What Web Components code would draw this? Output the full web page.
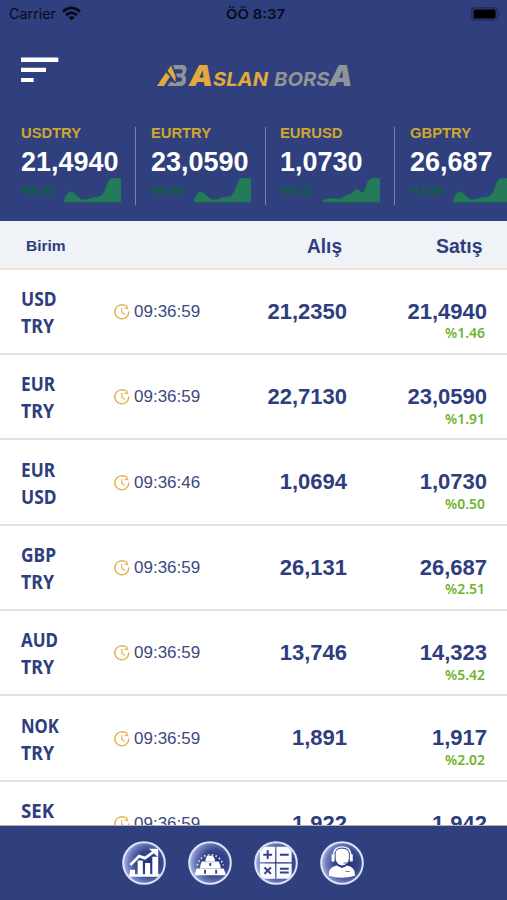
<!DOCTYPE html>
<html lang="tr">
<head>
<meta charset="utf-8">
<title>Aslan Borsa</title>
<style>
html,body{margin:0;height:100%;overflow:hidden;background:#fff}
body{font-family:"Liberation Sans",Arial,sans-serif;color:#2e3d7d}
</style>
</head>
<body>
<borsa-app></borsa-app>
<script>
const define = (name, render, after) => customElements.define(name, class extends HTMLElement {
  connectedCallback() {
    if (this.shadowRoot) return;
    this.attachShadow({mode: 'open'}).innerHTML = render(this);
    if (after) after(this);
  }
});
const a = (el, n) => el.getAttribute(n);

// Text squeezed or stretched horizontally to a given width.
define('fit-text', el => `<style>
:host{display:inline-block;white-space:nowrap;width:${a(el,'w')}px}
span{display:inline-block;transform-origin:0 50%}
</style><span><slot></slot></span>`, el => {
  const s = el.shadowRoot.querySelector('span');
  const w = s.offsetWidth ? s.getBoundingClientRect().width : 0;
  if (w) s.style.transform = `scaleX(${a(el,'w') / w})`;
});

define('status-bar', () => `<style>
:host{display:grid;grid-template-columns:1fr auto 1fr;align-items:center;height:28px;padding:0 6px 0 9px;color:#080b17;font:14px/28px Inter,sans-serif}
.l{display:flex;align-items:center;gap:6px}
.b{font-weight:600;font-size:13.5px}
.r{justify-self:end;display:flex;margin-top:-1px}
svg{display:block}
.l svg{margin-top:-2px}
</style>
<div class="l"><fit-text w="47">Carrier</fit-text>
<svg width="19" height="15" viewBox="0 0 19 15"><g fill="none" stroke="#080b17" stroke-width="2.8"><path d="M1 5.6Q9.5-1.8 18 5.6"/><path d="M4 9.2Q9.5 4.4 15 9.2"/></g><path d="M6.4 11.3Q9.5 9 12.6 11.3L9.5 14.4Z" fill="#080b17"/></svg></div>
<fit-text class="b" w="59">ÖÖ 8:37</fit-text>
<div class="r"><svg width="30" height="14" viewBox="0 0 30 14"><rect x=".8" y=".8" width="25.6" height="12.2" rx="3.4" fill="none" stroke="#20294f" stroke-width="1.2"/><rect x="2.6" y="2.4" width="22" height="9" rx="1.6" fill="#000"/><path d="M28 4.8q1.6 2 0 4.2z" fill="#20294f"/></svg></div>`);

define('brand-logo', () => `<style>
:host{display:flex;align-items:baseline;font:italic 700 20px/24px Inter,sans-serif;color:#e2aa3e;height:24px}
svg{display:block;align-self:flex-start;margin:1px 2px 0 0}
.big{font-size:28.5px;font-weight:900}
.g{color:#8f9496}
.n{font-weight:700;font-size:19px}
</style>
<svg width="30" height="22" viewBox="0 0 30 22">
<path d="M0 21 9 7.5 13 11.5 7 21ZM10.5 5.8 14 .5 18.5 11 18.5 17Z" fill="#e2aa3e"/>
<path d="M16 0H26Q30 .8 29.5 5 29.3 8.5 27 10 29.3 11.3 29 15.5 28.5 20.4 24 21H10.5L13.5 16.5 18.5 18.5 20 16.8H23.5Q25 16.5 25 14.5 25 12.3 23 12.3H20.5L18.8 8.6H24Q25.6 8.2 25.7 6.3 25.7 4.3 24 4.3H17.5Z" fill="#8f9496"/>
</svg>
<fit-text class="big" w="24">A</fit-text><fit-text class="n" w="55">SLAN</fit-text><fit-text class="n g" w="55.5" style="margin-left:5.5px">BORS</fit-text><fit-text class="big g" w="23.5">A</fit-text>`);

define('app-bar', () => `<style>
:host{display:flex;height:94px;padding:0 0 0 21px}
.menu{margin-top:29px;width:38px}
brand-logo{margin:36px 0 0 98px}
svg{display:block}
</style>
<svg class="menu" width="38" height="26" viewBox="0 0 38 26" fill="#fff"><path d="M0 .5H37.3V5H0zM0 10.7H25V15H0zM0 21H12.7V25H0z"/></svg>
<brand-logo></brand-logo>`);

const charts = [
 'M0 24V22C4 12 7 12 13 18 18 24 22 21 25 21 29 18 35 21 39 16 43 11 43 0 49 0H57V24Z',
 'M0 24V22.5C2 21 8 20.5 12 20.5 18 22.5 21 18 24 17 29 16.5 31 12.5 34 11 38 13 38 16 41 13.5 44 9 44 0 50 0H57V24Z'];
define('ticker-card', el => `<style>
:host{display:block;flex:none;box-sizing:border-box;width:115.2px;height:78px;border-right:1px solid #7c83a0;margin-right:14.4px;white-space:nowrap}
:host(:last-of-type){border-color:transparent}
.l{font:700 14.5px/22px "Liberation Sans",sans-serif;color:#cda72e;margin-top:-5px}
.v{font:700 27px/30px "Liberation Sans",sans-serif;color:#fff;margin-top:2.6px}
.c{display:flex;margin-top:1.4px}
.p{font:700 12px/26px "Liberation Sans",sans-serif;color:#0b6340;width:43px}
svg{display:block}
</style>
<div class="l"><fit-text w="${a(el,'lw')}">${a(el,'label')}</fit-text></div><div class="v"><fit-text w="${a(el,'vw')}">${a(el,'value')}</fit-text></div>
<div class="c"><div class="p">${a(el,'pct')}</div><svg width="57" height="25" viewBox="0 0 57 25"><path d="${charts[+a(el,'chart')]}" fill="#237b59" stroke="#1c7350" stroke-width=".8"/></svg></div>`);

define('ticker-strip', () => `<style>
:host{display:flex;padding:5px 0 0 21px;height:94px;overflow:hidden}
</style>
<ticker-card label="USDTRY" lw="60" value="21,4940" vw="97.5" pct="%0.65" chart="0"></ticker-card>
<ticker-card label="EURTRY" lw="60" value="23,0590" vw="97.5" pct="%0.96" chart="0"></ticker-card>
<ticker-card label="EURUSD" lw="62.5" value="1,0730" vw="82.5" pct="%0.12" chart="1"></ticker-card>
<ticker-card label="GBPTRY" lw="61" value="26,687" vw="82.5" pct="%1.08" chart="0"></ticker-card>`);

define('table-head', () => `<style>
:host{display:grid;grid-template-columns:1fr 140px 139px;height:48.5px;box-sizing:border-box;background:#eff2f6;border-bottom:2px solid #eee3d5;padding:2px 25px 0 26px;font-weight:700;align-items:center;line-height:46px}
.a{font-size:15.5px}.b{font-size:20px;text-align:right}
.s{padding-right:1.5px}
</style><div class="a">Birim</div><div class="b s"><fit-text w="35">Alış</fit-text></div><div class="b"><fit-text w="46.5">Satış</fit-text></div>`);

define('time-stamp', el => `<style>
:host{display:flex;align-items:center;gap:4px;font-size:17px;line-height:20px;color:#3c497f}
svg{display:block}
</style><svg width="16" height="16" viewBox="0 0 16 16" fill="none" stroke="#e3b556" stroke-width="1.5"><path d="M11.6 1.9A7 7 0 1 0 14.8 7.4"/><path d="M12.4.9 13.6 4.6 10.4 4.2M7.7 4V8.2L11 10.6" stroke-width="1.2"/></svg><span><slot></slot></span>`);

const widths = {USD:35.5, TRY:33, EUR:34, GBP:35, AUD:37, NOK:38, SEK:33};
define('rate-row', el => {
  const [x, y] = a(el, 'pair').split('/');
  return `<style>
:host{display:grid;grid-template-columns:93px 1fr 120px 140px;height:85.35px;box-sizing:border-box;border-bottom:2px solid #e3e3e5;padding:0 20px 0 21px;background:#fff}
.p{font:700 18.7px/27px "Noto Sans",sans-serif;padding-top:15.5px}
.p fit-text{display:block}
time-stamp{margin-top:32.5px;align-self:start}
.n{font-weight:700;font-size:22px;line-height:26px;text-align:right;padding-top:29.2px}
.c{font:600 14px/18px "Noto Sans",sans-serif;color:#6cb52d;padding-right:2.5px;margin-top:-.4px}
</style>
<div class="p"><fit-text w="${widths[x]}">${x}</fit-text><fit-text w="${widths[y]}">${y}</fit-text></div>
<time-stamp>${a(el,'time')}</time-stamp>
<div class="n">${a(el,'buy')}</div>
<div class="n">${a(el,'sell')}<div class="c"><fit-text w="40">${a(el,'change')}</fit-text></div></div>`;
});

const rates = [
 ['USD/TRY','09:36:59','21,2350','21,4940','%1.46'],
 ['EUR/TRY','09:36:59','22,7130','23,0590','%1.91'],
 ['EUR/USD','09:36:46','1,0694','1,0730','%0.50'],
 ['GBP/TRY','09:36:59','26,131','26,687','%2.51'],
 ['AUD/TRY','09:36:59','13,746','14,323','%5.42'],
 ['NOK/TRY','09:36:59','1,891','1,917','%2.02'],
 ['SEK/TRY','09:36:59','1,922','1,942','']];
define('rate-table', () => `<style>:host{display:block;flex:1;min-height:0;overflow:hidden}</style>` +
  rates.map(r => `<rate-row pair="${r[0]}" time="${r[1]}" buy="${r[2]}" sell="${r[3]}" change="${r[4]}"></rate-row>`).join(''));

const icons = {
 chart: `<path d="M7 34H39V36.5H7zM8 29.5H13.3V35H8zM16 20H21.3V35H16zM23.6 22.5H28.8V35H23.6zM31 16H37V35H31z" fill="#fff"/><path d="M8.5 24.5 17.5 15.5 23.5 17.5 32.5 11" fill="none" stroke="#fff" stroke-width="2.8"/><path d="M27.5 8H37V16.5Z" fill="#fff"/>`,
 gold: `<path d="M7 35V33.5L8.8 28H12.5V25.5L14 21H18V18.5L19.5 15H25.5L27.5 18.5V21H31.5L33.3 25.5V28H36.5L38.5 33.5V35Z" fill="#fff"/><path d="M17.4 29.5V33.5M28.8 29.5V33.5M22.8 22.5V25.5" stroke="#3f4b85" stroke-width="2"/><path d="M13 28.2H33.5M18 21.3H28" stroke="#b3bbdc" stroke-width=".8"/><path d="M9.5 25A13.5 13.5 0 0 1 36 25" fill="none" stroke="#dbe1f7" stroke-width="1.8" stroke-dasharray="1.6 2.4"/>`,
 calc: `<path d="M6 6H21.7V21.7H6zM22.9 6H38.5V21.7H22.9zM6 22.9H21.7V38.5H6zM22.9 22.9H38.5V38.5H22.9z" fill="#fafbff"/><path d="M9.5 14H18.5M14 9.5V18.5M26.5 14H35.5M10.7 27 17.3 33.6M17.3 27 10.7 33.6M26.5 28.4H35.5M26.5 32.3H35.5" stroke="#35427c" stroke-width="2.1"/>`,
 support: `<path d="M9 35.5Q8.500 26.500 17 25L22.500 27.500 28 25Q36 26.500 35.800 35.500Q22 39.500 9 35.500Z" fill="#fff"/><path d="M16 13Q16 7.800 22.500 7.800T29.500 13V18Q29 24.500 22.700 25 16.500 24.500 16 18Z" fill="#fff"/><path d="M13.800 16Q13.500 6 22.600 6T31.500 16" fill="none" stroke="#f3f5ff" stroke-width="1.500"/><path d="M11.800 13.500H14.900V21H11.800zM30.400 13.500H33.500V21H30.400z" fill="#fff"/><path d="M31 20.500Q29 23.500 24 22.500" fill="none" stroke="#586594" stroke-width="1"/><path d="M26 31.200H30.500" stroke="#a76c77" stroke-width="1"/>`
};
define('nav-button', el => `<style>:host{display:block;width:44px;height:44px}svg{display:block}</style>
<svg width="44" height="44" viewBox="0 0 45 45"><defs><radialGradient id="g" cx=".62" cy=".5" r=".62"><stop offset="0" stop-color="#202e79"/><stop offset=".5" stop-color="#38478d"/><stop offset=".8" stop-color="#7380c0"/><stop offset="1" stop-color="#b4bfe8"/></radialGradient><clipPath id="c"><circle cx="22.5" cy="22.5" r="20.3"/></clipPath></defs>
<circle cx="22.5" cy="22.5" r="21.5" fill="url(#g)"/><g clip-path="url(#c)">${icons[a(el,'icon')]}</g><circle cx="22.5" cy="22.5" r="21.3" fill="none" stroke="#dce3f8" stroke-width="2"/></svg>`);

define('bottom-nav', () => `<style>
:host{display:flex;justify-content:center;gap:22px;box-sizing:border-box;height:75.3px;padding:15px 21px 0 0;border-top:1px solid #b5b1ac;background:#303f7d}
</style><nav-button icon="chart"></nav-button><nav-button icon="gold"></nav-button><nav-button icon="calc"></nav-button><nav-button icon="support"></nav-button>`);

define('borsa-app', () => `<style>
:host{display:flex;flex-direction:column;height:900px;width:507px;overflow:hidden}
header{height:221px;background:#303f7d;overflow:hidden;flex:none}
bottom-nav,table-head{flex:none}
</style>
<header><status-bar></status-bar><app-bar></app-bar><ticker-strip></ticker-strip></header>
<table-head></table-head><rate-table></rate-table><bottom-nav></bottom-nav>`);
</script>
</body>
</html>
